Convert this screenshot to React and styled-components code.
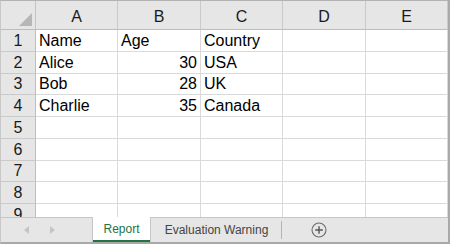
import React from 'react';
import styled, { createGlobalStyle } from 'styled-components';

const GlobalStyle = createGlobalStyle`
  html, body {
    margin: 0;
    padding: 0;
    background: #ffffff;
  }
`;

const columns = ['A', 'B', 'C', 'D', 'E'];

const rows = [
  ['Name', 'Age', 'Country'],
  ['Alice', 30, 'USA'],
  ['Bob', 28, 'UK'],
  ['Charlie', 35, 'Canada'],
  [],
  [],
  [],
  [],
  [],
];

class App extends React.Component {
  render() {
    return (
      <>
        <GlobalStyle />
        <Frame>
          <Sheet>
            <Corner>
              <svg width="14" height="14" viewBox="0 0 14 14">
                <polygon points="13,0 13,13 0,13" fill="#b6b6b6" />
              </svg>
            </Corner>
            {columns.map((c) => (
              <ColHeader key={c}>{c}</ColHeader>
            ))}
            {rows.map((row, i) => (
              <React.Fragment key={i}>
                <RowHeader>{i + 1}</RowHeader>
                {columns.map((c, j) => {
                  const value = row[j];
                  return (
                    <Cell key={c} numeric={typeof value === 'number'}>
                      {value}
                    </Cell>
                  );
                })}
              </React.Fragment>
            ))}
          </Sheet>
          <TabBar>
            <Nav>
              <Arrow>
                <svg width="6" height="8" viewBox="0 0 6 8">
                  <polygon points="5,0 5,8 0,4" fill="#c4c4c4" />
                </svg>
              </Arrow>
              <Arrow>
                <svg width="6" height="8" viewBox="0 0 6 8">
                  <polygon points="0,0 0,8 5,4" fill="#c4c4c4" />
                </svg>
              </Arrow>
            </Nav>
            <Tab active>Report</Tab>
            <Tab>Evaluation Warning</Tab>
            <AddButton>
              <svg width="16" height="16" viewBox="0 0 16 16">
                <circle cx="8" cy="8" r="7" fill="none" stroke="#6a6a6a" strokeWidth="1.1" />
                <path d="M8 4.2v7.6M4.2 8h7.6" stroke="#555" strokeWidth="1.4" />
              </svg>
            </AddButton>
          </TabBar>
        </Frame>
      </>
    );
  }
}

const Frame = styled.div`
  width: 450px;
  height: 244px;
  box-sizing: border-box;
  border-top: 1px solid #b2b2b2;
  border-left: 1px solid #c8c8c8;
  border-right: 2px solid #a9a9a9;
  border-bottom: 2px solid #a9a9a9;
  display: flex;
  flex-direction: column;
  overflow: hidden;
  font-family: 'Liberation Sans', Arial, sans-serif;
`;

const Sheet = styled.div`
  height: 216px;
  flex: none;
  overflow: hidden;
  display: grid;
  grid-template-columns: 35px 82px 83px 82px 83px 82px;
  grid-auto-rows: 21.75px;
  grid-template-rows: 29px;
  align-content: start;
`;

const HeaderBase = styled.div`
  box-sizing: border-box;
  background: #e6e6e6;
  color: #1a1a1a;
  font-size: 16px;
  display: flex;
  align-items: center;
  justify-content: center;
`;

const Corner = styled(HeaderBase)`
  border-right: 1px solid #c4c4c4;
  border-bottom: 1px solid #bdbdbd;
  align-items: flex-end;
  justify-content: flex-end;
  padding: 0 2px 2px 0;
`;

const ColHeader = styled(HeaderBase)`
  border-right: 1px solid #cacaca;
  border-bottom: 1px solid #bdbdbd;
  padding-top: 3px;
`;

const RowHeader = styled(HeaderBase)`
  border-right: 1px solid #bdbdbd;
  border-bottom: 1px solid #cacaca;
  padding-top: 1px;
`;

const Cell = styled.div`
  box-sizing: border-box;
  border-right: 1px solid #dadada;
  border-bottom: 1px solid #dadada;
  font-size: 16px;
  color: #000;
  display: flex;
  align-items: center;
  justify-content: ${(p) => (p.numeric ? 'flex-end' : 'flex-start')};
  padding: 1px 3px 0 3px;
  white-space: nowrap;
  overflow: hidden;
`;

const TabBar = styled.div`
  height: 25px;
  flex: none;
  box-sizing: border-box;
  background: #e6e6e6;
  border-top: 1px solid #c6c6c6;
  display: flex;
  align-items: stretch;
  font-size: 12px;
`;

const Nav = styled.div`
  width: 91px;
  display: flex;
  align-items: center;
  padding-left: 23px;
  gap: 20px;
  box-sizing: border-box;
`;

const Arrow = styled.span`
  display: flex;
  align-items: center;
`;

const Tab = styled.div`
  box-sizing: border-box;
  display: flex;
  align-items: center;
  justify-content: center;
  margin-top: ${(p) => (p.active ? '-1px' : '0')};
  width: ${(p) => (p.active ? '59px' : '131px')};
  background: ${(p) => (p.active ? '#ffffff' : 'transparent')};
  color: ${(p) => (p.active ? '#217346' : '#444444')};
  border-left: ${(p) => (p.active ? '1px solid #c6c6c6' : 'none')};
  border-right: ${(p) => (p.active ? '1px solid #c6c6c6' : 'none')};
  box-shadow: ${(p) => (p.active ? 'inset 0 -2px 0 #217346' : 'none')};
  padding-bottom: ${(p) => (p.active ? '2px' : '0')};
  position: relative;

  &::after {
    content: '';
    display: ${(p) => (p.active ? 'none' : 'block')};
    position: absolute;
    right: 0;
    top: 3px;
    bottom: 3px;
    width: 1px;
    background: #b4b4b4;
  }
`;

const AddButton = styled.div`
  display: flex;
  align-items: center;
  padding-left: 29px;
`;

export default App;
